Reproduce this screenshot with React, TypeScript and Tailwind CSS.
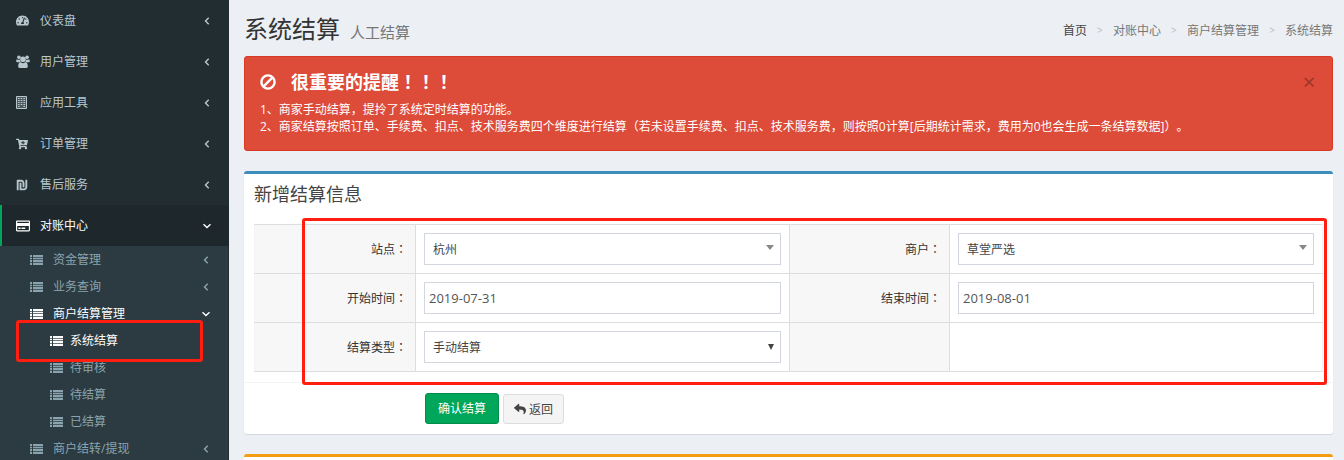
import { useState } from "react";
import type { ReactNode } from "react";
import { FaCartPlus, FaRegCreditCard, FaReply, FaShekelSign, FaTachometerAlt } from "react-icons/fa";

function UsersIcon() {
  return (
    <svg viewBox="0 0 14 13" className="h-[13px] w-3.5" fill="currentColor">
      <circle cx="2.9" cy="2.2" r="1.8" />
      <circle cx="11.1" cy="2.2" r="1.8" />
      <circle cx="7" cy="4.2" r="2.8" />
      <path d="M.9 4.3c1.2.7 2.2.6 3 .2 0 1.2.4 2.1 1 2.8H1.5C.6 7.3.2 6.8.2 6c0-.7.2-1.4.7-1.7zM13.1 4.3c-1.2.7-2.2.6-3 .2 0 1.2-.4 2.1-1 2.8h3.4c.9 0 1.3-.5 1.3-1.3 0-.7-.2-1.4-.7-1.7z" />
      <path d="M4.4 7.3c1.7 1.1 3.5 1.1 5.2 0 1.6.1 2.2 1.9 2.2 3.9 0 1.1-.7 1.8-1.8 1.8H4c-1.1 0-1.8-.7-1.8-1.8 0-2 .6-3.8 2.2-3.9z" />
    </svg>
  );
}

function BuildingIcon() {
  return (
    <svg viewBox="0 0 11 13" className="h-[13px] w-[11px]" fill="none" stroke="currentColor">
      <path d="M.5.5h10v12H.5z" fill="currentColor" fillOpacity=".3" />
      <path d="M2 2.5h1.6M4.7 2.5h1.6M7.4 2.5H9M2 4.5h1.6M4.7 4.5h1.6M7.4 4.5H9M2 6.5h1.6M4.7 6.5h1.6M7.4 6.5H9M2 8.5h1.6M4.7 8.5h1.6M7.4 8.5H9M2 10.5h1.6M7.4 10.5H9" />
    </svg>
  );
}

function ListIcon() {
  return (
    <svg viewBox="0 0 13 10" className="h-2.5 w-[13px] shrink-0" fill="currentColor">
      <path d="M0 0h2v2H0zM3 0h10v2H3zM0 3h2v1H0zM3 3h10v1H3zM0 5h2v2H0zM3 5h10v2H3zM0 8h2v2H0zM3 8h10v2H3z" />
      <path d="M0 2h2v1H0zM3 2h10v1H3zM0 4h2v1H0zM3 4h10v1H3zM0 7h2v1H0zM3 7h10v1H3z" opacity=".3" />
    </svg>
  );
}

function BanIcon() {
  return (
    <svg viewBox="0 0 16 16" className="size-4" fill="none" stroke="currentColor" strokeWidth="2.4">
      <circle cx="8" cy="8" r="6.6" />
      <path d="M3.4 12.6 12.6 3.4" />
    </svg>
  );
}

function Angle({ down = false }: { down?: boolean }) {
  return (
    <svg viewBox="0 0 10 10" className="size-2.5" fill="none" stroke="currentColor" strokeWidth="1.4">
      <path d={down ? "M1.5 3.3 5 6.6 8.5 3.3" : "M6.7 1.7 3.5 5l3.2 3.3"} />
    </svg>
  );
}

const menu: { label: string; icon: ReactNode }[] = [
  { label: "仪表盘", icon: <FaTachometerAlt size={13} /> },
  { label: "用户管理", icon: <UsersIcon /> },
  { label: "应用工具", icon: <BuildingIcon /> },
  { label: "订单管理", icon: <FaCartPlus size={12} /> },
  { label: "售后服务", icon: <FaShekelSign size={12} /> },
  { label: "对账中心", icon: <FaRegCreditCard size={14} /> },
];

const settleMenu = ["系统结算", "待审核", "待结算", "已结算"];

function SubItem({ label, open = false }: { label: string; open?: boolean }) {
  return (
    <a
      href="#"
      className={`flex h-[27px] items-center pr-[17px] pl-[30px] ${open ? "text-white" : "text-[#8aa4af]"}`}
    >
      <ListIcon />
      <span className="ml-2.5 flex-1">{label}</span>
      <Angle down={open} />
    </a>
  );
}

function Sidebar() {
  const [active, setActive] = useState("对账中心");

  return (
    <aside className="w-[229px] shrink-0 bg-[#222d32]">
      <nav>
        {menu.map((item) => (
          <a
            key={item.label}
            href="#"
            onClick={() => setActive(item.label)}
            className={`flex h-[41px] items-center border-l-2 pr-[17px] pl-3.5 ${
              item.label === active
                ? "border-[#00a65a] bg-[#1e282c] text-white"
                : "border-transparent text-[#b8c7ce]"
            }`}
          >
            <span className="w-6">{item.icon}</span>
            <span className="flex-1">{item.label}</span>
            <Angle down={item.label === active} />
          </a>
        ))}
        <div className="mr-px bg-[#2c3b41]">
          <SubItem label="资金管理" />
          <SubItem label="业务查询" />
          <SubItem label="商户结算管理" open />
          {settleMenu.map((label, i) => (
            <a
              key={label}
              href="#"
              className={`relative flex h-[27px] items-center gap-[7px] pl-[50px] ${i === 0 ? "text-white" : "text-[#8aa4af]"}`}
            >
              <ListIcon />
              {label}
              {i === 0 && (
                <span className="pointer-events-none absolute -top-[7px] right-[25px] -bottom-2 left-4 z-10 rounded-[3px] border-3 border-[#ff1e10]" />
              )}
            </a>
          ))}
          <SubItem label="商户结转/提现" />
        </div>
      </nav>
    </aside>
  );
}

function Th({ label, htmlFor }: { label?: string; htmlFor?: string }) {
  return (
    <th className="border border-[#ddd] bg-[#f7f7f7] p-2 text-right font-normal text-[#333] first:border-l-[#f4f4f4]">
      {label && (
        <label htmlFor={htmlFor}>
          {label}
          <span className="font-['Noto_Sans_CJK_TC',sans-serif]">：</span>
        </label>
      )}
    </th>
  );
}

function Td({ children }: { children?: ReactNode }) {
  return <td className="h-[49px] border border-[#ddd] p-2 last:border-r-[#f4f4f4]">{children}</td>;
}

function Select({ id, value, small = false }: { id: string; value: string; small?: boolean }) {
  return (
    <div className="relative">
      <select
        id={id}
        className="block h-8 w-full appearance-none border border-[#d2d6de] bg-white px-2 text-[#444] outline-none"
      >
        <option>{value}</option>
      </select>
      {small ? (
        <svg viewBox="0 0 6 6" className="pointer-events-none absolute top-[13px] right-[7px] size-1.5" fill="#444">
          <path d="M0 0h6L3 6z" />
        </svg>
      ) : (
        <svg viewBox="0 0 8 5" className="pointer-events-none absolute top-3 right-[7px] h-[5px] w-2" fill="#888">
          <path d="M0 0h8L4 5z" />
        </svg>
      )}
    </div>
  );
}

function DateInput({ id, value }: { id: string; value: string }) {
  return (
    <input
      id={id}
      type="text"
      defaultValue={value}
      className="block h-8 w-full border border-[#d2d6de] bg-white px-1 text-[13px] text-[#555] outline-none"
    />
  );
}

function Breadcrumb() {
  const items = ["对账中心", "商户结算管理", "系统结算"];
  return (
    <ol className="flex items-center text-[#777]">
      <li>
        <a href="#" className="text-[#444]">首页</a>
      </li>
      {items.map((item) => (
        <li key={item} className="flex items-center">
          <span className="w-[26px] text-center text-[10px] text-[#bbb]">&gt;</span>
          {item}
        </li>
      ))}
    </ol>
  );
}

function App() {
  const [showAlert, setShowAlert] = useState(true);

  return (
    <div className="flex h-screen overflow-hidden bg-[#ecf0f5] font-['Open_Sans','Noto_Sans_CJK_SC',sans-serif] text-[12px] leading-[17px] text-[#333] [text-spacing-trim:space-all]">
      <Sidebar />
      <main className="min-w-0 flex-1 pr-[11px] pl-[15px]">
        <header className="flex h-14 items-center justify-between pt-1">
          <h1 className="flex items-baseline gap-2.5 text-[24px] leading-6">
            系统结算
            <small className="text-[15px] text-[#777]">人工结算</small>
          </h1>
          <Breadcrumb />
        </header>

        {showAlert && (
          <div className="mb-5 rounded-[3px] border border-[#d73925] bg-[#dd4b39] p-[15px] text-white">
            <div className="mb-2.5 flex h-[19px] items-center">
              <BanIcon />
              <h4 className="ml-[15px] flex-1 text-[18px] font-bold">
                很重要的提醒
                <span className="font-['Noto_Sans_CJK_TC',sans-serif]">！！！</span>
              </h4>
              <button
                type="button"
                aria-label="关闭"
                onClick={() => setShowAlert(false)}
                className="w-4 text-[22px] text-black opacity-30"
              >
                ×
              </button>
            </div>
            <p>1、商家手动结算，提拎了系统定时结算的功能。</p>
            <p>
              2、商家结算按照订单、手续费、扣点、技术服务费四个维度进行结算（若未设置手续费、扣点、技术服务费，则按照0计算[后期统计需求，费用为0也会生成一条结算数据]）。
            </p>
          </div>
        )}

        {/* Settlement form */}
        <section className="mb-5 rounded-[3px] border-t-3 border-[#3c8dbc] bg-white shadow-[0_1px_1px_rgba(0,0,0,0.1)]">
          <h3 className="p-2.5 text-[18px] leading-5 text-[#444]">新增结算信息</h3>
          <form onSubmit={(e) => e.preventDefault()}>
            <div className="p-2.5">
              <div className="relative">
                <table className="w-full table-fixed border-collapse">
                  <colgroup>
                    <col className="w-[161px]" />
                    <col className="w-[35%]" />
                    <col className="w-[15%]" />
                    <col />
                  </colgroup>
                  <tbody>
                    <tr>
                      <Th label="站点" htmlFor="site" />
                      <Td><Select id="site" value="杭州" /></Td>
                      <Th label="商户" htmlFor="merchant" />
                      <Td><Select id="merchant" value="草堂严选" /></Td>
                    </tr>
                    <tr>
                      <Th label="开始时间" htmlFor="start" />
                      <Td><DateInput id="start" value="2019-07-31" /></Td>
                      <Th label="结束时间" htmlFor="end" />
                      <Td><DateInput id="end" value="2019-08-01" /></Td>
                    </tr>
                    <tr>
                      <Th label="结算类型" htmlFor="type" />
                      <Td><Select id="type" value="手动结算" small /></Td>
                      <Th />
                      <Td />
                    </tr>
                  </tbody>
                </table>
                <div className="pointer-events-none absolute -top-1.5 -right-1 -bottom-[13px] left-12 rounded-[3px] border-3 border-[#ff1e10]" />
              </div>
            </div>
            <div className="flex items-end gap-1 border-t border-[#f4f4f4] py-2.5 pl-[181px]">
              <button type="submit" className="h-[31px] rounded-[3px] border border-[#008d4c] bg-[#00a65a] px-3 text-white">
                确认结算
              </button>
              <button type="button" className="flex h-[30px] items-center gap-[3px] rounded-[3px] border border-[#ddd] bg-[#f4f4f4] px-2.5 text-[#444]">
                <FaReply size={12} />
                返回
              </button>
            </div>
          </form>
        </section>

        <section className="h-10 rounded-[3px] border-t-3 border-[#f39c12] bg-white" />
      </main>
    </div>
  );
}

export default App;
